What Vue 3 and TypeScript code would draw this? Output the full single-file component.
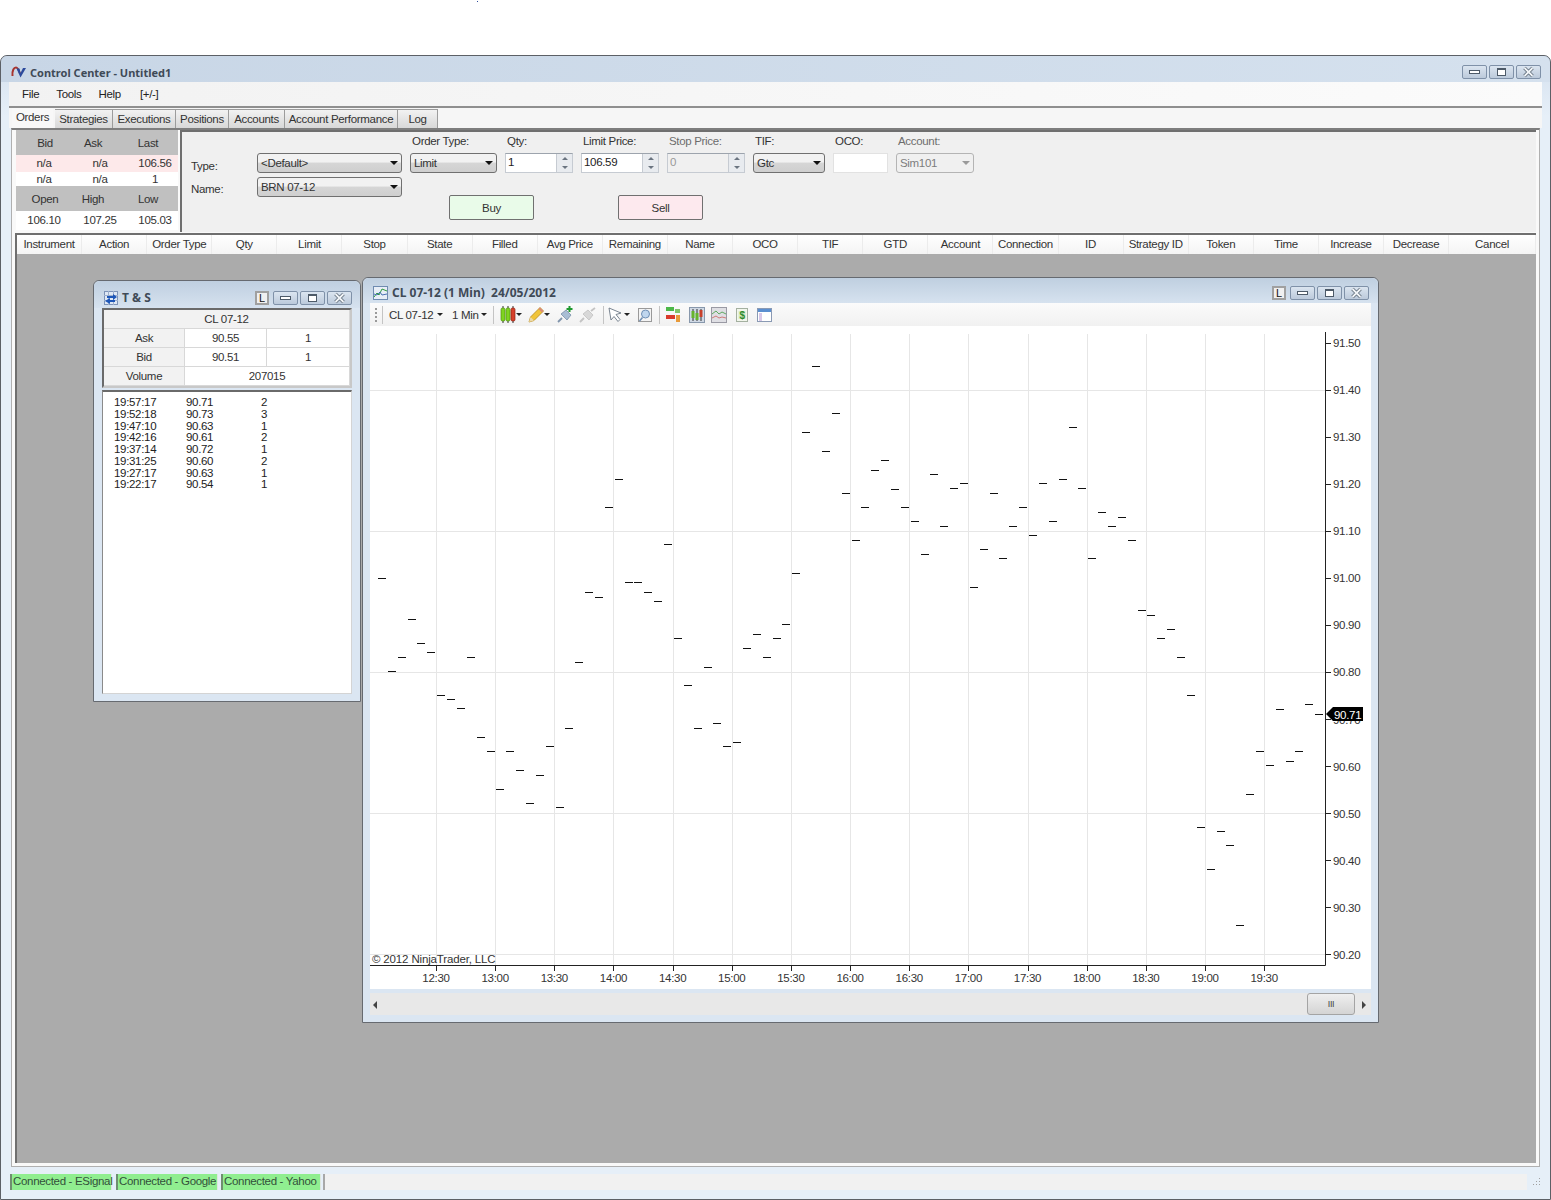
<script setup lang="ts">
interface Tab { label: string; width: number }

const tabs: Tab[] = [
  { label: 'Orders', width: 41 },
  { label: 'Strategies', width: 58 },
  { label: 'Executions', width: 63 },
  { label: 'Positions', width: 53 },
  { label: 'Accounts', width: 56 },
  { label: 'Account Performance', width: 113 },
  { label: 'Log', width: 40 },
]
const columns = ['Instrument', 'Action', 'Order Type', 'Qty', 'Limit', 'Stop', 'State', 'Filled', 'Avg Price', 'Remaining', 'Name', 'OCO', 'TIF', 'GTD', 'Account', 'Connection', 'ID', 'Strategy ID', 'Token', 'Time', 'Increase', 'Decrease', 'Cancel']
const trades = [
  ['19:57:17', '90.71', '2'],
  ['19:52:18', '90.73', '3'],
  ['19:47:10', '90.63', '1'],
  ['19:42:16', '90.61', '2'],
  ['19:37:14', '90.72', '1'],
  ['19:31:25', '90.60', '2'],
  ['19:27:17', '90.63', '1'],
  ['19:22:17', '90.54', '1'],
]
// y position of every one minute tick, read off the chart
const tickY = [578, 671, 657, 619, 643, 652, 695, 699, 708, 657, 737, 751, 789, 751, 770, 803, 775, 746, 807, 728, 662, 592, 597, 507, 479, 582, 582, 592, 601, 544, 638, 685, 728, 667, 723, 746, 742, 648, 634, 657, 638, 624, 573, 432, 366, 451, 413, 493, 540, 507, 470, 460, 489, 507, 521, 554, 474, 526, 488, 483, 587, 549, 493, 558, 526, 507, 535, 483, 521, 479, 427, 488, 558, 512, 526, 517, 540, 610, 615, 638, 629, 657, 695, 827, 869, 831, 845, 925, 794, 751, 765, 709, 761, 751, 704, 714]
const ticks = tickY.map((y, i) => ({ x: 382 + i * 9.865, y: y + 0.5 }))
const prices = ['91.50', '91.40', '91.30', '91.20', '91.10', '91.00', '90.90', '90.80', '90.70', '90.60', '90.50', '90.40', '90.30', '90.20']
  .map((label, i) => ({ label, y: 342.6 + i * 47.05 }))
const times = ['12:30', '13:00', '13:30', '14:00', '14:30', '15:00', '15:30', '16:00', '16:30', '17:00', '17:30', '18:00', '18:30', '19:00', '19:30']
  .map((label, i) => ({ label, x: 436 + i * 59.15 }))
const gridY = [390, 531, 672, 813, 954]
</script>

<template>
  <div class="page">
    <i class="speck"></i>
    <div class="window">
      <header class="titlebar">
        <svg class="logo" width="16" height="12" viewBox="0 0 16 12">
          <path d="M1.5 10C1 4 3 1.5 5 1.500c2 0 3 3 4 6" fill="none" stroke="#a8342e" stroke-width="2" />
          <path d="M5.500 2.500h3L9.500 7l2.500-5h3L9.500 11.500z" fill="#2c4a9c" />
        </svg>
        <span class="title-text">Control Center - Untitled1</span>
        <div class="win-btns">
          <span class="wbtn"><i class="g-min"></i></span>
          <span class="wbtn"><i class="g-max"></i></span>
          <span class="wbtn"><svg width="15" height="12" viewBox="0 0 15 12"><path d="M3.500 2l8 8M11.500 2l-8 8" stroke="#5a6876" stroke-width="3.400" /><path d="M3.500 2l8 8M11.500 2l-8 8" stroke="#f2f5f8" stroke-width="1.800" /></svg></span>
        </div>
      </header>
      <nav class="menu">
        <span>File</span><span>Tools</span><span>Help</span><span class="plus">[+/-]</span>
      </nav>
      <div class="tabs">
        <div v-for="(t, i) in tabs" :key="t.label" class="tab" :class="{ active: i === 0 }" :style="{ width: t.width + 'px' }">{{ t.label }}</div>
      </div>
      <section class="tab-page">
        <div class="top-row">
          <div class="quote">
            <div class="q-head"><span>Bid</span><span>Ask</span><span class="q-last">Last</span></div>
            <div class="q-vals pink"><span>n/a</span><span>n/a</span><span class="q-num">106.56</span></div>
            <div class="q-vals small"><span>n/a</span><span>n/a</span><span class="q-num">1</span></div>
            <div class="q-head"><span>Open</span><span>High</span><span class="q-last">Low</span></div>
            <div class="q-vals tall"><span>106.10</span><span>107.25</span><span class="q-num">105.03</span></div>
          </div>
          <div class="order-form">
            <span></span><span></span>
            <label>Order Type:</label>
            <label>Qty:</label>
            <label>Limit Price:</label>
            <label class="off">Stop Price:</label>
            <label>TIF:</label>
            <label>OCO:</label>
            <label class="off">Account:</label>

            <label class="side">Type:</label>
            <div class="combo">&lt;Default&gt;<i class="caret"></i></div>
            <div class="combo">Limit<i class="caret"></i></div>
            <div class="spin">1<span class="spin-btns"><i class="up"></i><i class="dn"></i></span></div>
            <div class="spin">106.59<span class="spin-btns"><i class="up"></i><i class="dn"></i></span></div>
            <div class="spin disabled">0<span class="spin-btns"><i class="up"></i><i class="dn"></i></span></div>
            <div class="combo">Gtc<i class="caret"></i></div>
            <div class="plain"></div>
            <div class="combo disabled">Sim101<i class="caret"></i></div>

            <label class="side name-label">Name:</label>
            <div class="combo name-combo">BRN 07-12<i class="caret"></i></div>
            <div class="actions">
              <button class="buy">Buy</button>
              <button class="sell">Sell</button>
            </div>
          </div>
        </div>

        <div class="orders">
          <div class="grid-head">
            <span v-for="c in columns" :key="c">{{ c }}</span>
          </div>
          <div class="mdi">
            <!-- time and sales window -->
            <div class="child ts">
              <div class="child-title">
                <svg width="14" height="14" viewBox="0 0 14 14">
                  <rect x="0.500" y="0.500" width="13" height="13" fill="#dfe8f5" stroke="#7d93b8" />
                  <path d="M0 4.500h14M0 9.500h14M4.500 0v14M9.500 0v14" stroke="#9fb0cc" stroke-width="1" />
                  <path d="M3 5h6V3l4 3-4 3V7H3zM11 9H6V7L1 10l5 3v-2h5z" fill="#1d56b8" />
                </svg>
                <b>T &amp; S</b>
                <div class="win-btns">
                  <span class="lock">L</span>
                  <span class="wbtn"><i class="g-min"></i></span>
                  <span class="wbtn"><i class="g-max"></i></span>
                  <span class="wbtn"><svg width="15" height="12" viewBox="0 0 15 12"><path d="M3.500 2l8 8M11.500 2l-8 8" stroke="#5a6876" stroke-width="3.400" /><path d="M3.500 2l8 8M11.500 2l-8 8" stroke="#f2f5f8" stroke-width="1.800" /></svg></span>
                </div>
              </div>
              <div class="ts-table">
                <div class="ts-cell head wide3">CL 07-12</div>
                <div class="ts-cell head">Ask</div><div class="ts-cell">90.55</div><div class="ts-cell">1</div>
                <div class="ts-cell head">Bid</div><div class="ts-cell">90.51</div><div class="ts-cell">1</div>
                <div class="ts-cell head">Volume</div><div class="ts-cell wide2">207015</div>
              </div>
              <div class="ts-list">
                <div v-for="r in trades" :key="r[0]" class="ts-row">
                  <span>{{ r[0] }}</span><span>{{ r[1] }}</span><span>{{ r[2] }}</span>
                </div>
              </div>
            </div>

            <!-- chart window -->
            <div class="child chart">
              <div class="child-title">
                <svg width="15" height="14" viewBox="0 0 15 14">
                  <rect x="0.500" y="0.500" width="14" height="13" fill="#e8eef7" stroke="#6f8bb0" />
                  <path d="M1 11l3-4 2 2 3-6 5 2" fill="none" stroke="#2f9a3e" />
                  <path d="M1 8l3 1 3-3 2 3 5-1" fill="none" stroke="#4a72b4" />
                </svg>
                <b>CL 07-12 (1 Min)&nbsp; 24/05/2012</b>
                <div class="win-btns">
                  <span class="lock">L</span>
                  <span class="wbtn"><i class="g-min"></i></span>
                  <span class="wbtn"><i class="g-max"></i></span>
                  <span class="wbtn"><svg width="15" height="12" viewBox="0 0 15 12"><path d="M3.500 2l8 8M11.500 2l-8 8" stroke="#5a6876" stroke-width="3.400" /><path d="M3.500 2l8 8M11.500 2l-8 8" stroke="#f2f5f8" stroke-width="1.800" /></svg></span>
                </div>
              </div>
              <div class="toolbar">
                <i class="grip"></i><i class="sep m5"></i>
                <span class="tb-text cl m6">CL 07-12</span><i class="mini m5"></i>
                <span class="tb-text min m9">1 Min</span><i class="mini m4"></i>
                <i class="sep m6"></i>
                <svg class="m6" width="16" height="17" viewBox="0 0 16 17">
                  <path d="M3 0v17M8 0v17M13 0v17" stroke="#333" />
                  <rect x="1" y="2" width="4" height="13" rx="1.500" fill="#7fd321" stroke="#4f8f10" stroke-width=".7" />
                  <rect x="6" y="2" width="4" height="13" rx="1.500" fill="#7fd321" stroke="#4f8f10" stroke-width=".7" />
                  <rect x="11" y="2" width="4" height="13" rx="1.500" fill="#d6402a" stroke="#8f2010" stroke-width=".7" />
                </svg>
                <i class="mini"></i>
                <svg class="m6" width="16" height="17" viewBox="0 0 16 17">
                  <path d="M1 16l1.500-5L12 1.500l3.500 3.500L6 14.500z" fill="#f0c43a" stroke="#b8891a" stroke-width=".8" />
                  <path d="M1 16l1.500-5 3.500 3.500z" fill="#ecd9a8" />
                  <path d="M12 1.500l3.500 3.500-1.500 1.500-3.500-3.500z" fill="#d98a7a" />
                </svg>
                <i class="mini"></i>
                <svg class="m7" width="17" height="17" viewBox="0 0 17 17">
                  <path d="M1 16l4-4" stroke="#7f93ab" stroke-width="1.800" />
                  <path d="M4 8l5-4 5 5-4 5z" fill="#a9bdd4" stroke="#6f86a0" stroke-width=".7" />
                  <path d="M12.500 0v6M9.500 3h6" stroke="#1f9a2f" stroke-width="2" />
                </svg>
                <svg class="m5" width="17" height="17" viewBox="0 0 17 17">
                  <path d="M1 16l4-4M12 5l4-3" stroke="#c4c4c4" stroke-width="1.800" />
                  <path d="M4 8l5-4 5 5-4 5z" fill="#d8d8d8" stroke="#bcbcbc" stroke-width=".7" />
                </svg>
                <i class="sep m7"></i>
                <svg class="m4" width="15" height="16" viewBox="0 0 15 16">
                  <path d="M1 1l12 5-5 1.500 4 5-2 2-4-5-3 3.500z" fill="#fff" stroke="#6b7785" stroke-width=".9" />
                </svg>
                <i class="mini m1"></i>
                <svg class="m7" width="16" height="16" viewBox="0 0 16 16">
                  <rect x="1.500" y="1.500" width="13" height="13" fill="#f4f4f4" stroke="#9a9a9a" />
                  <circle cx="8.500" cy="7" r="4" fill="#bfd6ee" stroke="#6f8fb4" />
                  <path d="M5.500 10.500L2.500 14" stroke="#6f8fb4" stroke-width="1.500" />
                </svg>
                <i class="sep m6"></i>
                <svg class="m5" width="16" height="17" viewBox="0 0 16 17">
                  <rect x="1" y="1" width="8" height="4" fill="#4cb848" />
                  <rect x="1" y="9" width="9" height="4" fill="#d93a2c" />
                  <path d="M11 9h4v7h-4z" fill="#e89a3a" />
                  <path d="M10 3h5v4h-5z" fill="#7fc46a" />
                </svg>
                <svg class="m8" width="16" height="16" viewBox="0 0 16 16">
                  <rect x="0.500" y="0.500" width="15" height="15" fill="#cfd8e4" stroke="#8898ac" />
                  <path d="M4 2v12M8 2v12M12 2v12" stroke="#333" />
                  <rect x="2.500" y="4" width="3" height="7" fill="#67b32c" />
                  <rect x="6.500" y="6" width="3" height="7" fill="#67b32c" />
                  <rect x="10.500" y="3" width="3" height="7" fill="#c8402a" />
                </svg>
                <svg class="m6" width="16" height="16" viewBox="0 0 16 16">
                  <rect x="0.500" y="0.500" width="15" height="15" fill="#dfdfe4" stroke="#9a9aa4" />
                  <path d="M1 7l4-3 3 3 3-2 4 2" fill="none" stroke="#5fa860" />
                  <path d="M1 11l4-2 3 2 3-1 4 1" fill="none" stroke="#d07a78" />
                </svg>
                <svg class="m8" width="14" height="16" viewBox="0 0 14 16">
                  <rect x="1.500" y="1.500" width="11" height="13" fill="#f2f6ec" stroke="#a4b0a0" />
                  <rect x="3.500" y="4" width="7" height="8" fill="#d6ecc4" />
                  <text x="7" y="11.500" class="dollar" text-anchor="middle">$</text>
                </svg>
                <svg class="m8" width="15" height="16" viewBox="0 0 15 16">
                  <rect x="0.500" y="1.500" width="14" height="13" fill="#fff" stroke="#8a9ab4" />
                  <rect x="1" y="2" width="13" height="3" fill="#5b8fd0" />
                  <rect x="2" y="6" width="3" height="8" fill="#d8c8e8" />
                </svg>
              </div>
              <svg class="plot" width="1001" height="663" viewBox="370 326 1001 663">
                <rect x="370" y="326" width="1001" height="663" fill="#fff" />
                <g stroke="#e6e6e6">
                  <path v-for="y in gridY" :key="y" :d="`M370 ${y + 0.5}H1325`" />
                  <path v-for="t in times" :key="t.label" :d="`M${Math.round(t.x) + 0.5} 334V965`" />
                </g>
                <path d="M1325.500 332V965.500H370" fill="none" stroke="#222" />
                <g stroke="#222">
                  <path v-for="p in prices" :key="p.label" :d="`M1325 ${Math.round(p.y) + 0.5}h6`" />
                  <path v-for="t in times" :key="t.label" :d="`M${Math.round(t.x) + 0.5} 965v6`" />
                </g>
                <path v-for="(t, i) in ticks" :key="i" :d="`M${Math.round(t.x) - 4} ${t.y}h8`" stroke="#111" />
                <g class="axis">
                  <text v-for="p in prices" :key="p.label" x="1333" :y="p.y + 4.5">{{ p.label }}</text>
                  <text v-for="t in times" :key="t.label" :x="t.x" y="982" text-anchor="middle">{{ t.label }}</text>
                  <text x="372" y="963" class="copy">© 2012 NinjaTrader, LLC</text>
                </g>
                <path d="M1326 714l7-7h30v14h-30z" fill="#000" />
                <text x="1334" y="718.500" class="last-price">90.71</text>
              </svg>
              <div class="scrollbar">
                <i class="arrow-l"></i>
                <span class="thumb">III</span>
                <i class="arrow-r"></i>
              </div>
            </div>
          </div>
        </div>
      </section>
      <footer class="status">
        <span class="conn c1">Connected - ESignal</span>
        <span class="conn c2">Connected - Google</span>
        <span class="conn c3">Connected - Yahoo</span>
        <span class="status-fill"></span>
        <svg class="resize" width="12" height="12" viewBox="0 0 12 12">
          <path d="M10 2h1v1h-1zM7 5h1v1H7zM10 5h1v1h-1zM4 8h1v1H4zM7 8h1v1H7zM10 8h1v1h-1z" fill="#a0a0a0" />
        </svg>
      </footer>
    </div>
  </div>
</template>

<style scoped>
.page {
  position: relative;
  width: 1551px;
  height: 1200px;
  padding-top: 55px;
  box-sizing: border-box;
  font-family: "Liberation Sans", Arial, sans-serif;
  font-size: 11.5px;
  letter-spacing: -0.32px;
  color: #333;
  overflow: hidden;
  background: #fff;
}
.speck {
  position: absolute;
  left: 477px;
  top: 1px;
  width: 1px;
  height: 1px;
  background: #2c4a9c;
}
.window {
  height: 1145px;
  box-sizing: border-box;
  border: 1px solid #5c6066;
  border-radius: 7px 7px 0 0;
  background: linear-gradient(#c3d2e3, #dbe6f2 24px, #e6eff8 60px);
  display: flex;
  flex-direction: column;
  padding: 0 8px;
}
.titlebar {
  height: 26px;
  display: flex;
  align-items: center;
  flex: none;
  margin: 0 -8px;
  padding: 6px 9px 0 10px;
  box-sizing: border-box;
  background: linear-gradient(90deg, #c8d6e6, #d5e1ee);
  border-radius: 7px 7px 0 0;
}
.logo { margin-right: 3px; }
.title-text {
  font-family: "Noto Sans", sans-serif;
  font-weight: 700;
  font-size: 11px;
  letter-spacing: 0;
  color: #3f4a57;
}
.win-btns {
  margin-left: auto;
  display: flex;
  align-items: center;
  gap: 2px;
}
.wbtn {
  width: 25px;
  height: 14px;
  box-sizing: border-box;
  border: 1px solid #7f91a8;
  border-radius: 2px;
  background: linear-gradient(#dbe5f0, #bccadb);
  display: flex;
  align-items: center;
  justify-content: center;
}
.g-min {
  width: 11px;
  height: 4px;
  box-sizing: border-box;
  border: 1px solid #4d5a68;
  background: #fff;
}
.g-max {
  width: 9px;
  height: 8px;
  box-sizing: border-box;
  border: 1px solid #4d5a68;
  border-top-width: 2px;
  background: #fff;
}
.lock {
  width: 14px;
  height: 14px;
  margin-right: 2px;
  box-sizing: border-box;
  border: 2px solid #a0a0a0;
  background: #f0f0f0;
  color: #111;
  font-size: 11px;
  line-height: 10px;
  text-align: center;
}
.menu {
  height: 23px;
  flex: none;
  display: flex;
  align-items: center;
  padding: 0 0 1px 13px;
  background: linear-gradient(90deg, #f2f2f2, #fbfbfb);
  border-bottom: 2px solid #8f8f8f;
}
.menu span { margin-right: 17px; color: #222; }
.menu .plus { margin-left: 2px; }
.tabs {
  height: 20px;
  flex: none;
  display: flex;
  align-items: flex-end;
  padding-left: 3px;
  background: #f6f6f6;
}
.tab {
  height: 19px;
  box-sizing: border-box;
  border: 1px solid #9c9c9c;
  border-bottom: 0;
  border-left-width: 0;
  background: linear-gradient(#f2f2f2, #d8d8d8);
  text-align: center;
  line-height: 19px;
  color: #333;
}
.tab.active {
  height: 20px;
  margin-right: 2px;
  background: #f8f8f8;
  border: 0;
  line-height: 18px;
}
.tab-page {
  flex: 1;
  min-height: 0;
  display: flex;
  flex-direction: column;
  margin: 0 2px;
  padding: 0 3px 3px 3px;
  background: #f9f9f9;
  border-top: 2px solid #7e7e7e;
  border-bottom: 1px solid #b0b0b0;
  border-left: 1px solid #b0b0b0;
  border-right: 1px solid #b0b0b0;
}
.top-row {
  height: 102px;
  flex: none;
  display: flex;
  gap: 2px;
}
.quote {
  width: 162px;
  flex: none;
  margin-left: 1px;
  text-align: center;
}
.q-head {
  height: 25px;
  display: grid;
  grid-template-columns: 58px 38px 66px;
  align-items: center;
  background: #c0c0c0;
}
.q-last { padding-left: 6px; }
.q-vals {
  height: 17px;
  box-sizing: border-box;
  padding-bottom: 2px;
  display: grid;
  grid-template-columns: 56px 56px 50px;
  align-items: center;
  background: #fff;
}
.q-vals.pink { background: #fde9ea; }
.q-vals.small { height: 14px; padding-bottom: 1px; }
.q-vals.tall { height: 19px; }
.q-num { padding-left: 4px; }
.order-form {
  flex: 1;
  background: #f0f0f0;
  border-top: 2px solid #6f6f6f;
  border-left: 2px solid #6f6f6f;
  padding: 1px 0 0 9px;
  display: grid;
  grid-template-columns: 58px 145px 87px 68px 78px 78px 72px 55px 78px;
  grid-template-rows: 17px 20px 20px 23px;
  column-gap: 8px;
  row-gap: 3px;
}
.order-form label { line-height: 16px; padding-left: 2px; }
.order-form label.off { color: #6d6d6d; }
.order-form label.side { padding: 3px 0 0; line-height: 20px; }
.order-form .name-label { grid-row: 3; grid-column: 1; padding-top: 1px; }
.name-combo { grid-row: 3; grid-column: 2; margin-top: 1px; }
.combo {
  position: relative;
  box-sizing: border-box;
  height: 20px;
  padding-left: 3px;
  line-height: 18px;
  border: 1px solid #707070;
  border-radius: 3px;
  background: linear-gradient(#f2f2f2 45%, #d6d6d6 50%, #cfcfcf);
}
.combo.disabled {
  color: #7d7d7d;
  border-color: #b4b4b4;
  background: #f0f0f0;
}
.caret {
  position: absolute;
  right: 3px;
  top: 7px;
  border: 4px solid transparent;
  border-top: 4px solid #111;
  border-bottom: 0;
}
.combo.disabled .caret { border-top-color: #9a9a9a; }
.spin, .plain {
  position: relative;
  box-sizing: border-box;
  height: 20px;
  padding-left: 2px;
  line-height: 17px;
  background: #fff;
  border: 1px solid #c6cbd2;
  border-top-color: #9da4ad;
  color: #222;
}
.plain { border-color: #e2e2e2; }
.spin.disabled {
  background: #f0f0f0;
  color: #999;
}
.spin-btns {
  position: absolute;
  right: 0;
  top: 0;
  bottom: 0;
  width: 15px;
  display: flex;
  flex-direction: column;
  background: #e8ebef;
  border-left: 1px solid #c6cbd2;
}
.spin-btns i {
  flex: 1;
  display: flex;
  align-items: center;
  justify-content: center;
}
.spin-btns i::after {
  content: "";
  border: 3px solid transparent;
}
.up::after { border-bottom-color: #6a7480 !important; border-top: 0 !important; }
.dn::after { border-top-color: #6a7480 !important; border-bottom: 0 !important; }
.actions {
  grid-column: 3 / 10;
  grid-row: 3 / 5;
  align-self: end;
  margin-bottom: 2px;
  display: flex;
  padding-left: 39px;
}
.actions button {
  width: 85px;
  height: 25px;
  box-sizing: border-box;
  border: 1px solid #707070;
  border-radius: 2px;
  font: inherit;
  letter-spacing: inherit;
  color: #333;
}
.buy { background: #e9fbe9; }
.sell { background: #fde9ee; margin-left: 84px; }
.orders {
  flex: 1;
  min-height: 0;
  display: flex;
  flex-direction: column;
  margin-top: 1px;
  border-top: 2px solid #6f6f6f;
  border-left: 2px solid #6f6f6f;
  background: #ababab;
}
.grid-head {
  height: 19px;
  flex: none;
  display: grid;
  grid-template-columns: repeat(22, 65.1px) 1fr;
  background: linear-gradient(#fff, #f4f4f4);
  line-height: 18px;
  text-align: center;
}
.grid-head span { border-right: 1px solid #ececec; }
.mdi {
  position: relative;
  flex: 1;
  min-height: 0;
}
.child {
  position: absolute;
  box-sizing: border-box;
  border: 1px solid #666a70;
  border-radius: 6px 6px 0 0;
  background: #dbe6f2;
  display: flex;
  flex-direction: column;
}
.ts { left: 76px; top: 26px; width: 268px; height: 422px; padding: 0 8px 7px; }
.chart { left: 345px; top: 23px; width: 1017px; height: 746px; padding: 0 7px 7px; }
.child-title {
  flex: none;
  display: flex;
  align-items: center;
  gap: 4px;
  margin: 0 -7px;
  box-sizing: border-box;
  background: linear-gradient(#bfcfe0, #d6e2ef);
  border-radius: 6px 6px 0 0;
}
.ts .child-title { height: 27px; padding: 6px 8px 0 10px; margin: 0 -8px; }
.chart .child-title { height: 25px; padding: 4px 9px 0 10px; }
.child-title b {
  font-family: "Noto Sans", sans-serif;
  font-size: 12px;
  letter-spacing: 0;
  color: #3f4a57;
}
.ts-table {
  flex: none;
  height: 80px;
  box-sizing: border-box;
  display: grid;
  grid-template-columns: 81px 82px 1fr;
  grid-auto-rows: 1fr;
  border: 2px solid #6a6a6a;
  border-right-color: #c8c8c8;
  border-bottom-color: #c8c8c8;
  background: #fff;
}
.ts-cell {
  display: flex;
  align-items: center;
  justify-content: center;
  border-right: 1px solid #d8d8d8;
  border-bottom: 1px solid #d8d8d8;
}
.ts-cell.head { background: #f2f2f2; }
.wide3 { grid-column: span 3; }
.wide2 { grid-column: span 2; }
.ts-list {
  flex: 1;
  margin-top: 2px;
  padding: 4px 0 0 11px;
  background: #fff;
  border-top: 2px solid #6a6a6a;
  border-left: 1px solid #8a8a8a;
  border-right: 1px solid #d4d4d4;
  border-bottom: 1px solid #d4d4d4;
}
.ts-row {
  display: grid;
  grid-template-columns: 72px 75px 20px;
  height: 11.75px;
  line-height: 12px;
  color: #222;
}
.toolbar {
  flex: none;
  height: 23px;
  display: flex;
  align-items: center;
  padding-left: 5px;
  background: linear-gradient(#fbfbfb, #f1f1f1);
}
.toolbar svg { flex: none; }
.m1 { margin-left: 1px; }
.m4 { margin-left: 4px; }
.m5 { margin-left: 5px; }
.m6 { margin-left: 6px; }
.m7 { margin-left: 7px; }
.m8 { margin-left: 8px; }
.m9 { margin-left: 9px; }
.grip {
  width: 2px;
  height: 14px;
  background: repeating-linear-gradient(#9a9a9a 0 2px, transparent 2px 4px);
}
.sep {
  width: 1px;
  height: 18px;
  background: #c4c4c4;
}
.mini {
  border: 3px solid transparent;
  border-top: 3px solid #222;
  border-bottom: 0;
}
.tb-text { color: #333; flex: none; white-space: nowrap; }
.tb-text.cl { width: 43px; }
.tb-text.min { width: 25px; }
.plot { flex: none; display: block; }
.axis text {
  font-size: 11.5px;
  fill: #333;
  letter-spacing: -0.3px;
}
.axis .copy { letter-spacing: -0.15px; }
.last-price {
  font-size: 11.5px;
  fill: #fff;
  letter-spacing: -0.3px;
}
.dollar {
  font-size: 10px;
  font-weight: 700;
  fill: #2f8a2f;
}
.scrollbar {
  margin-top: 4px;
  flex: none;
  height: 22px;
  position: relative;
  background: #e8e8e8;
  display: flex;
  align-items: center;
}
.arrow-l, .arrow-r {
  position: absolute;
  top: 8px;
  border: 4px solid transparent;
}
.arrow-l { left: 3px; border-right-color: #444; border-left: 0; }
.arrow-r { right: 5px; border-left-color: #444; border-right: 0; }
.thumb {
  position: absolute;
  right: 16px;
  top: 0;
  width: 48px;
  height: 22px;
  box-sizing: border-box;
  border: 1px solid #a4a4a4;
  border-radius: 3px;
  background: linear-gradient(#efefef, #d4d4d4);
  color: #444;
  font-size: 9px;
  line-height: 20px;
  text-align: center;
}
.status {
  flex: none;
  height: 32px;
  display: flex;
  align-items: flex-start;
  padding-top: 7px;
  box-sizing: border-box;
  position: relative;
  margin: 0 3px 0 1px;
}
.conn {
  height: 16px;
  box-sizing: border-box;
  border-left: 2px solid #6f8f6f;
  border-right: 1px solid #dfe8df;
  background: #90ee90;
  color: #33503a;
  line-height: 15px;
  padding-left: 1px;
  white-space: nowrap;
}
.c1 { width: 102px; margin-right: 4px; }
.c2 { width: 102px; margin-right: 3px; }
.c3 { width: 100px; margin-right: 2px; }
.status-fill {
  width: 1204px;
  height: 16px;
  box-sizing: border-box;
  border-left: 2px solid #a8a8a8;
  background: #f1f1f1;
}
.resize {
  position: absolute;
  right: -2px;
  top: 9px;
}
</style>

<style>
html, body { margin: 0; background: #fff; }
</style>
